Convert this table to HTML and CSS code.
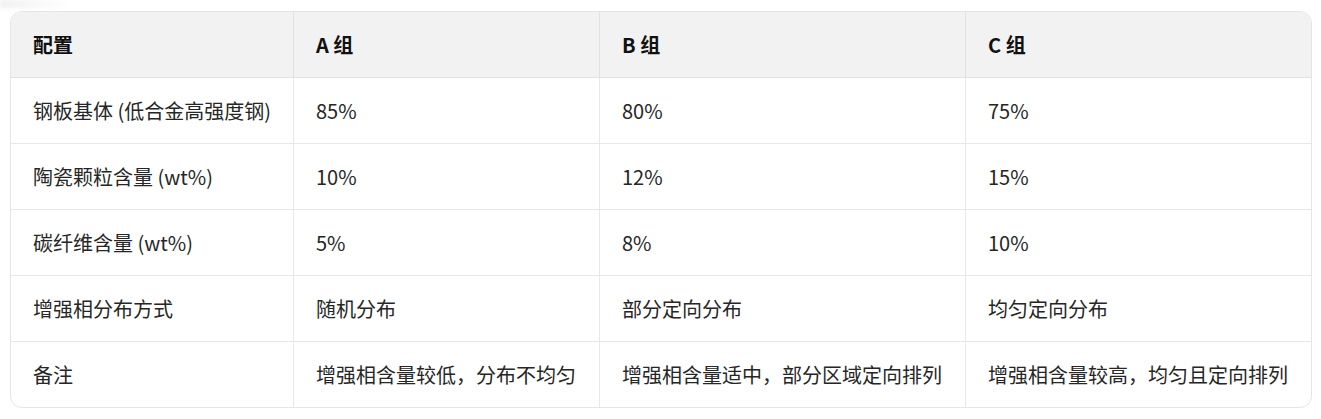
FILE: index.html
```html
<!DOCTYPE html>
<html lang="zh-CN">
<head>
<meta charset="utf-8">
<title>配置表</title>
<link rel="stylesheet" href="styles.css">
</head>
<body>
<div class="shade"></div>
<div class="table-wrap">
  <table class="spec">
    <colgroup>
      <col class="c1"><col class="c2"><col class="c3"><col class="c4">
    </colgroup>
    <thead>
      <tr><th>配置</th><th>A 组</th><th>B 组</th><th>C 组</th></tr>
    </thead>
    <tbody>
      <tr><td>钢板基体 (低合金高强度钢)</td><td>85%</td><td>80%</td><td>75%</td></tr>
      <tr><td>陶瓷颗粒含量 (wt%)</td><td>10%</td><td>12%</td><td>15%</td></tr>
      <tr><td>碳纤维含量 (wt%)</td><td>5%</td><td>8%</td><td>10%</td></tr>
      <tr><td>增强相分布方式</td><td>随机分布</td><td>部分定向分布</td><td>均匀定向分布</td></tr>
      <tr><td>备注</td><td>增强相含量较低，分布不均匀</td><td>增强相含量适中，部分区域定向排列</td><td>增强相含量较高，均匀且定向排列</td></tr>
    </tbody>
  </table>
</div>
</body>
</html>
```

FILE: styles.css
```css
html, body {
  margin: 0;
  padding: 0;
  background: #ffffff;
}
body {
  padding: 11px 0 0 10px;
  font-family: "Noto Sans CJK SC", "Noto Sans", "Liberation Sans", sans-serif;
  position: relative;
}
.shade {
  position: absolute;
  left: 0;
  top: 0;
  width: 70px;
  height: 8px;
  background: linear-gradient(90deg, rgba(0,0,0,0.06), rgba(0,0,0,0));
  filter: blur(2px);
}
.table-wrap {
  width: 1300px;
  border: 1px solid #e5e5e5;
  border-radius: 12px;
  overflow: hidden;
}
.spec {
  width: 1300px;
  border-collapse: separate;
  border-spacing: 0;
  table-layout: fixed;
  font-size: 20px;
  color: #262626;
}
.c1 { width: 283px; }
.c2 { width: 306px; }
.c3 { width: 366px; }
.c4 { width: 345px; }
.spec th, .spec td {
  box-sizing: border-box;
  height: 66px;
  padding: 0 8px 0 22px;
  text-align: left;
  vertical-align: middle;
  border-right: 1px solid #e8e8e8;
  border-bottom: 1px solid #e8e8e8;
  white-space: nowrap;
  line-height: 26px;
}
.spec th:last-child, .spec td:last-child {
  border-right: none;
}
.spec tbody tr:last-child td {
  border-bottom: none;
  height: 65px;
}
.spec th {
  background: #f2f2f2;
  font-weight: 700;
  color: #111111;
  border-bottom-color: #e2e2e2;
  border-right-color: #e2e2e2;
}
```
